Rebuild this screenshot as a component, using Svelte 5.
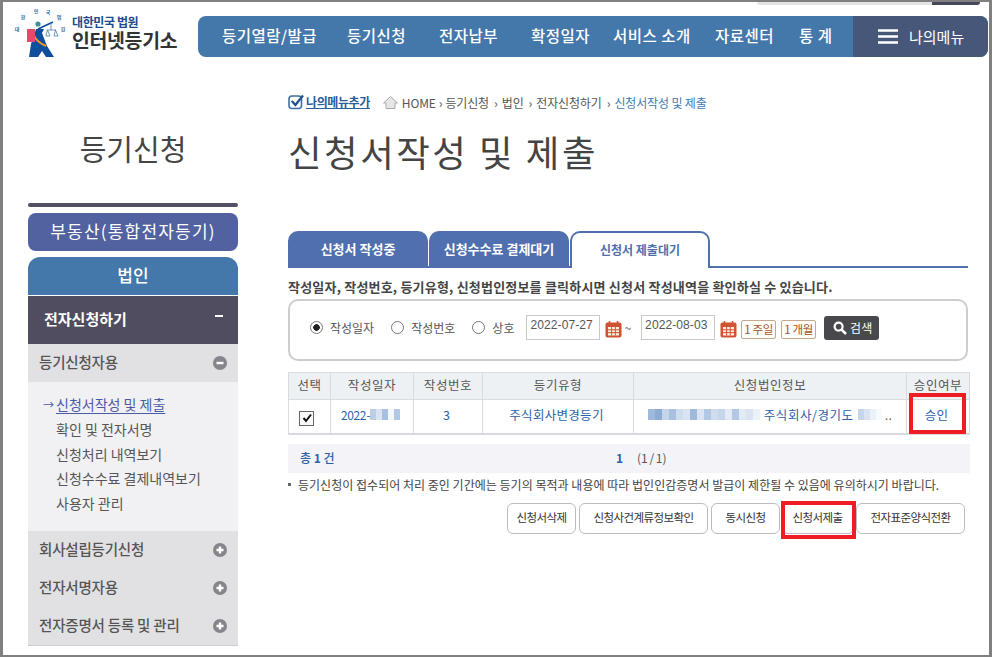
<script>
  // w is the pitch from one nav label to the next
  const navItems = [
    { name: '등기열람/발급', w: 125 },
    { name: '등기신청', w: 92 },
    { name: '전자납부', w: 92 },
    { name: '확정일자', w: 82 },
    { name: '서비스 소개', w: 102 },
    { name: '자료센터', w: 84 },
    { name: '통 계', w: 33 }
  ];
  const subLinks = ['신청서작성 및 제출', '확인 및 전자서명', '신청처리 내역보기', '신청수수료 결제내역보기', '사용자 관리'];
  const closedMenus = ['회사설립등기신청', '전자서명자용', '전자증명서 등록 및 관리'];
  const tabs = ['신청서 작성중', '신청수수료 결제대기', '신청서 제출대기'];
  const radios = ['작성일자', '작성번호', '상호'];
  const heads = ['선택', '작성일자', '작성번호', '등기유형', '신청법인정보', '승인여부'];
  const actions = ['신청서삭제', '신청사건계류정보확인', '동시신청', '신청서제출', '전자표준양식전환'];
  // pixelated bits that hide personal data in the row
  const blurDate = [0.35, 0.2, 0.45, 0.05, 0.4];
  const blurName = [0.5, 0.6, 0.3, 0.45, 0.25, 0.2, 0.5, 0.2, 0.4, 0.25, 0.3, 0.15, 0.4, 0.15, 0.2, 0.1];
  const blurAddr = [0.3, 0.2, 0.1, 0.04];
</script>

{#snippet calendar()}
  <svg class="cal" width="17" height="17" viewBox="0 0 17 17">
    <rect x="0.5" y="1.5" width="16" height="15" rx="2" fill="#cf5333" />
    <rect x="3" y="6" width="11" height="8.5" fill="#fbeedd" />
    <path d="M3 8.8h11M3 11.6h11M6.6 6v8.5M10.3 6v8.5" stroke="#cf5333" stroke-width="1" />
    <path d="M4.5 0v3M12.5 0v3" stroke="#cf5333" stroke-width="1.6" />
  </svg>
{/snippet}

<div class="frame">
  <div class="topstrip"><span></span></div>

  <header>
    <div class="logo">
      <svg width="56" height="52" viewBox="12 6 56 52">
        <g font-size="5" font-weight="700" fill="#2f6fa5" font-family="'Noto Sans CJK KR', sans-serif" text-anchor="middle">
          <text x="17" y="31">대</text>
          <text x="23" y="19">한</text>
          <text x="36" y="13">민</text>
          <text x="48" y="14">국</text>
          <text x="59" y="19">법</text>
          <text x="63" y="31">원</text>
        </g>
        <path d="M36 29 L31 44 L29 57 L38 57 L42 51 L46 57 L54 57 L47 46 L42 33 L44 29 Z" fill="#0d4f9c" />
        <path d="M33 33 C35 40 41 44 46 46" stroke="#f39a1f" stroke-width="2" fill="none" />
        <circle cx="38" cy="24" r="2.6" fill="#3f8fa0" />
        <path d="M38 29 L53 22" stroke="#0d4f9c" stroke-width="1.8" fill="none" />
        <rect x="27" y="29" width="8" height="13" fill="#e8486b" />
        <path d="M51 23v7M47 30h9M47.5 30l-1.5 6h4zM55.5 30l-1.5 6h4z" stroke="#4a7fa5" stroke-width="0.8" fill="none" />
      </svg>
      <div class="logotext">
        <div class="court">대한민국 법원</div>
        <div class="registry">인터넷등기소</div>
      </div>
    </div>
    <nav>
      <div class="navlinks">
        {#each navItems as item}
          <span style="width:{item.w}px">{item.name}</span>
        {/each}
      </div>
      <div class="mymenu">
        <svg width="20" height="15" viewBox="0 0 20 15"><path d="M0 1.5h20M0 7.5h20M0 13.5h20" stroke="#fff" stroke-width="2.6" /></svg>
        <span>나의메뉴</span>
      </div>
    </nav>
  </header>

  <div class="body">
    <aside>
      <h2>등기신청</h2>
      <div class="rule"></div>
      <div class="btn-realty">부동산(통합전자등기)</div>
      <div class="btn-corp">법인</div>
      <div class="menu-dark"><span>전자신청하기</span><i></i></div>
      <div class="menu-grey">
        <span>등기신청자용</span>
        <svg width="14" height="14" viewBox="0 0 14 14"><circle cx="7" cy="7" r="7" fill="#85858b" /><path d="M3.5 7h7" stroke="#fff" stroke-width="2.4" /></svg>
      </div>
      <ul>
        {#each subLinks as link, i}
          <li class:current={i === 0}>
            {#if i === 0}<em>→</em>{/if}<span>{link}</span>
          </li>
        {/each}
      </ul>
      {#each closedMenus as label}
        <div class="menu-grey">
          <span>{label}</span>
          <svg width="14" height="14" viewBox="0 0 14 14"><circle cx="7" cy="7" r="7" fill="#85858b" /><path d="M3.5 7h7M7 3.5v7" stroke="#fff" stroke-width="2.4" /></svg>
        </div>
      {/each}
      <div class="menu-end"></div>
    </aside>

    <main>
      <div class="crumbs">
        <span class="addmenu">
          <svg width="16" height="16" viewBox="0 0 16 16">
            <rect x="1" y="2" width="12.5" height="12.5" rx="3" fill="none" stroke="#3f6fa8" stroke-width="1.6" />
            <path d="M3.8 7 L7.4 11 L15 1.5" fill="none" stroke="#1f4f8f" stroke-width="2.2" />
          </svg>
          <b>나의메뉴추가</b>
        </span>
        <svg class="home" width="15" height="13" viewBox="0 0 15 13">
          <path d="M7.5 0.5 L0.5 7 H3 V12.5 H12 V7 H14.5 Z" fill="#e6e6e6" stroke="#a8a8a8" />
        </svg>
        <span class="path">HOME</span><span class="gt first">›</span>
        <span class="path">등기신청</span><span class="gt">›</span>
        <span class="path">법인</span><span class="gt">›</span>
        <span class="path">전자신청하기</span><span class="gt">›</span>
        <span class="path here">신청서작성 및 제출</span>
      </div>

      <h1>신청서작성 및 제출</h1>

      <div class="tabs">
        {#each tabs as tab, i}
          <div class="tab" class:on={i === 2}>{tab}</div>
        {/each}
      </div>

      <p class="info">작성일자, 작성번호, 등기유형, 신청법인정보를 클릭하시면 신청서 작성내역을 확인하실 수 있습니다.</p>

      <div class="search">
        {#each radios as label, i}
          <span class="radio" class:on={i === 0}><i></i>{label}</span>
        {/each}
        <span class="date">2022-07-27</span>
        {@render calendar()}
        <span class="tilde">~</span>
        <span class="date">2022-08-03</span>
        {@render calendar()}
        <span class="period">1 주일</span>
        <span class="period">1 개월</span>
        <span class="go">
          <svg width="14" height="14" viewBox="0 0 14 14"><circle cx="5.6" cy="5.6" r="4" fill="none" stroke="#fff" stroke-width="2.2" /><path d="M8.6 8.6 L13 13" stroke="#fff" stroke-width="2.6" /></svg>
          검색
        </span>
      </div>

      <div class="grid">
        {#each heads as head}
          <div class="th">{head}</div>
        {/each}
        <div class="td"><span class="check"><svg width="12" height="12" viewBox="0 0 12 12"><path d="M2.5 6 L5 9 L10 2.5" fill="none" stroke="#111" stroke-width="2" /></svg></span></div>
        <div class="td dateno">2022-{#each blurDate as a}<u style="opacity:{a}"></u>{/each}</div>
        <div class="td">3</div>
        <div class="td">주식회사변경등기</div>
        <div class="td corp">
          {#each blurName as a}<u class="wide" style="opacity:{a}"></u>{/each}
          <span class="corpname">주식회사/경기도</span>
          {#each blurAddr as a}<u style="opacity:{a}"></u>{/each}
          <span class="dots">..</span>
        </div>
        <div class="td approve">승인</div>
      </div>

      <div class="paging">
        <span class="total">총 <b>1</b> 건</span>
        <b class="cur">1</b>
        <span class="pages">(1 / 1)</span>
      </div>

      <p class="note">등기신청이 접수되어 처리 중인 기간에는 등기의 목적과 내용에 따라 법인인감증명서 발급이 제한될 수 있음에 유의하시기 바랍니다.</p>

      <div class="actions">
        {#each actions as action, i}
          <span class="action" class:marked={i === 3}>{action}</span>
        {/each}
      </div>
    </main>
  </div>
</div>

<style>
  :global(body) {
    margin: 0;
    background: #fff;
  }

  .frame {
    position: relative;
    box-sizing: border-box;
    width: 992px;
    height: 657px;
    overflow: hidden;
    border-style: solid;
    border-color: #808080;
    border-width: 2px 3px 2px 3px;
    background: #fff;
    color: #444;
    font-family: "Noto Sans CJK KR", "Noto Sans", sans-serif;
    font-size: 13px;
  }

  .topstrip {
    position: absolute;
    top: 0;
    left: 754px;
    width: 223px;
    height: 3px;
    background: #e4e4e4;
    border-radius: 0 0 5px 5px;
    overflow: hidden;
  }

  .topstrip span {
    display: block;
    margin-left: 175px;
    height: 3px;
    background: #47475a;
  }

  header {
    display: flex;
    height: 55px;
  }

  .logo {
    display: flex;
    width: 195px;
    padding: 4px 0 0 9px;
    box-sizing: border-box;
    gap: 4px;
  }

  .logotext {
    padding-top: 10px;
  }

  .court {
    font-size: 12px;
    line-height: 12px;
    font-weight: 700;
    color: #1c4a8c;
    letter-spacing: -0.4px;
  }

  .registry {
    margin-top: 2px;
    font-size: 19.4px;
    line-height: 20px;
    font-weight: 700;
    color: #333;
    letter-spacing: -0.3px;
    white-space: nowrap;
  }

  nav {
    display: flex;
    margin-top: 14px;
    height: 41px;
    width: 790px;
    background: #4477aa;
    border-radius: 8px;
    overflow: hidden;
    color: #fff;
  }

  .navlinks {
    display: flex;
    flex: 1;
    align-items: center;
    padding: 0 0 3px 24px;
  }

  .navlinks span {
    flex: none;
    font-size: 15.5px;
    font-weight: 500;
    letter-spacing: 0.5px;
    white-space: nowrap;
  }

  .mymenu {
    display: flex;
    align-items: center;
    gap: 11px;
    width: 135px;
    padding: 0 0 1px 25px;
    box-sizing: border-box;
    background: #47577a;
    font-size: 15px;
  }

  .body {
    display: flex;
  }

  aside {
    width: 210px;
    margin-left: 25px;
    flex: none;
  }

  aside h2 {
    margin: 66px 0 0;
    height: 80px;
    text-align: center;
    font-size: 29px;
    line-height: 50px;
    font-weight: 400;
    color: #444;
  }

  .rule {
    height: 4px;
    background: #544f65;
    border-radius: 2px;
    margin-bottom: 6px;
  }

  .btn-realty {
    height: 38px;
    line-height: 36px;
    background: #5261a0;
    border-radius: 8px;
    color: #fff;
    text-align: center;
    font-size: 17px;
    letter-spacing: 1.2px;
    margin-bottom: 6px;
    white-space: nowrap;
  }

  .btn-corp {
    height: 38px;
    line-height: 36px;
    background: #4477aa;
    border-radius: 12px 12px 0 0;
    border-bottom: 1px solid #fff;
    color: #fff;
    text-align: center;
    font-size: 17px;
    font-weight: 500;
  }

  .menu-dark {
    display: flex;
    justify-content: space-between;
    align-items: center;
    height: 48px;
    box-sizing: border-box;
    padding: 0 15px 4px 16px;
    background: #4f4d5f;
    color: #fff;
    font-size: 15px;
    font-weight: 700;
  }

  .menu-dark i {
    width: 8px;
    height: 2px;
    background: #fff;
    margin-bottom: 4px;
  }

  .menu-grey {
    display: flex;
    justify-content: space-between;
    align-items: center;
    height: 38px;
    padding: 0 11px;
    background: #e1e1e4;
    color: #555;
    font-size: 14.5px;
    font-weight: 500;
    letter-spacing: -0.2px;
  }

  .menu-grey span {
    margin-top: -4px;
  }

  .menu-end {
    height: 1px;
    background: #cfcfd2;
  }

  aside ul {
    margin: 0;
    padding: 10px 0 0 28px;
    height: 149px;
    box-sizing: border-box;
    list-style: none;
    background: #f1f1f3;
    font-size: 14px;
    color: #555;
  }

  aside li {
    position: relative;
    height: 24.75px;
    line-height: 24px;
  }

  aside li.current {
    color: #4a5aa5;
  }

  aside li.current span {
    text-decoration: underline;
    text-underline-offset: 3px;
    text-decoration-thickness: 1px;
  }

  aside li em {
    position: absolute;
    left: -13px;
    font-style: normal;
    font-size: 11px;
  }

  main {
    width: 682px;
    margin-left: 50px;
    flex: none;
  }

  .crumbs {
    display: flex;
    align-items: center;
    height: 20px;
    margin-top: 35px;
    font-size: 12px;
    letter-spacing: -0.15px;
    color: #555;
    white-space: nowrap;
  }

  .addmenu {
    display: flex;
    align-items: center;
    gap: 2px;
    margin-right: 13px;
    color: #2b5d9c;
    letter-spacing: -0.4px;
  }

  .addmenu b {
    font-weight: 700;
    border-bottom: 1px solid #2b5d9c;
    line-height: 13px;
  }

  .home {
    margin-right: 4px;
  }

  .gt {
    margin: 0 4px 0 5px;
    font-weight: 700;
    color: #777;
  }

  .gt.first {
    margin: 0 3px;
  }

  .here {
    color: #3f7ab5;
  }

  h1 {
    margin: 15px 0 0;
    height: 64px;
    font-size: 36.5px;
    line-height: 50px;
    font-weight: 400;
    letter-spacing: 2.5px;
    color: #444;
    white-space: nowrap;
  }

  .tabs {
    display: flex;
    margin-top: 40px;
    width: 680px;
    height: 37px;
    box-sizing: border-box;
    border-bottom: 2px solid #4f6fae;
  }

  .tab {
    width: 140px;
    height: 37px;
    box-sizing: border-box;
    margin-right: 1px;
    padding-bottom: 3px;
    display: flex;
    align-items: center;
    justify-content: center;
    background: #4f6fae;
    border-radius: 10px 10px 0 0;
    color: #fff;
    font-size: 13px;
    font-weight: 700;
    white-space: nowrap;
  }

  .tab.on {
    height: 37px;
    background: #fff;
    color: #4f6fae;
    border: 2px solid #4f6fae;
    border-bottom: 0;
    position: relative;
    z-index: 1;
    font-size: 12px;
  }

  .info {
    margin: 10px 0 0;
    height: 21px;
    font-size: 13px;
    line-height: 17px;
    font-weight: 700;
    color: #444;
    letter-spacing: 0.2px;
    white-space: nowrap;
  }

  .search {
    display: flex;
    align-items: center;
    box-sizing: border-box;
    width: 680px;
    height: 62px;
    padding: 0 0 5px 20px;
    border: 2px solid #cdcdcd;
    border-radius: 10px;
    font-size: 12px;
    color: #555;
  }

  .radio {
    display: flex;
    align-items: center;
    gap: 7px;
    margin-right: 17px;
  }

  .radio i {
    width: 11px;
    height: 11px;
    border: 1px solid #777;
    border-radius: 50%;
    background: #fff;
    box-sizing: content-box;
  }

  .radio.on i {
    background: radial-gradient(circle, #222 0 3px, #fff 3.6px);
  }

  .radio:nth-child(3) {
    margin-right: 12px;
  }

  .date {
    box-sizing: border-box;
    width: 74px;
    height: 25px;
    padding: 0 0 5px 3px;
    border: 1px solid #c8c8c8;
    line-height: 16px;
    font-family: "Liberation Sans", sans-serif;
    font-size: 12px;
    letter-spacing: 0.1px;
    display: flex;
    align-items: center;
  }

  .cal {
    margin: 3px 0 0 5px;
  }

  .tilde {
    margin: 0 10px 0 2px;
  }

  .period {
    box-sizing: border-box;
    width: 35px;
    height: 19px;
    line-height: 17px;
    margin: 4px 0 0 4px;
    border: 1px solid #c4a98c;
    border-radius: 2px;
    font-size: 11.5px;
    letter-spacing: -0.3px;
    text-align: center;
    color: #a4551e;
    background: #fffdf9;
    white-space: nowrap;
  }

  .period + .period {
    margin-left: 5px;
  }

  .go {
    display: flex;
    align-items: center;
    gap: 3px;
    box-sizing: border-box;
    width: 55px;
    height: 24px;
    margin: 0 0 0 8px;
    padding: 0 0 0 9px;
    border-radius: 3px;
    background: #48484d;
    color: #fff;
    font-size: 12px;
    white-space: nowrap;
  }

  .grid {
    display: grid;
    grid-template-columns: 42px 83px 69px 151px 273px 64px;
    grid-template-rows: 27px 33px;
    width: 682px;
    margin-top: 11px;
    box-sizing: border-box;
    border-top: 1px solid #d9dbe0;
    border-bottom: 2px solid #d9dbe0;
  }

  .th,
  .td {
    display: flex;
    align-items: center;
    justify-content: center;
    box-sizing: border-box;
    border-left: 1px solid #d9dbe0;
    white-space: nowrap;
  }

  .th:nth-child(6),
  .td:nth-child(12) {
    border-right: 1px solid #d9dbe0;
  }

  .th {
    padding-bottom: 3px;
    background: #eef1f4;
    border-bottom: 1px solid #d9dbe0;
    font-size: 12.5px;
    letter-spacing: 0.6px;
    color: #555;
  }

  .td {
    padding: 0 3px 5px 0;
    color: #2b62a8;
    font-size: 12.5px;
    letter-spacing: 0.3px;
  }

  .td.corp {
    padding-right: 0;
  }

  .dateno {
    font-size: 12px;
    letter-spacing: -0.4px;
  }

  .td u {
    display: inline-block;
    width: 6px;
    height: 11px;
    background: #3f74b8;
  }

  .td u.wide {
    width: 7px;
  }

  .corpname {
    margin: 0 4px;
    letter-spacing: 0.55px;
  }

  .dots {
    margin-left: 3px;
    color: #666;
  }

  .check {
    display: flex;
    align-items: center;
    justify-content: center;
    width: 13px;
    height: 13px;
    border: 1px solid #666;
    background: #fafafa;
    margin: 8px 3px 0 0;
  }

  /* red annotation boxes drawn over the screenshot */
  .approve {
    position: relative;
  }

  .approve::after {
    content: "";
    position: absolute;
    top: -7px;
    left: 2px;
    right: 3px;
    bottom: -1px;
    border: 4px solid #ee1c25;
  }

  .paging {
    display: flex;
    align-items: center;
    width: 682px;
    height: 29px;
    margin-top: 9px;
    padding: 0 0 3px 12px;
    box-sizing: border-box;
    background: #f3f3f8;
    color: #2b62a8;
    font-size: 12px;
    font-weight: 500;
  }

  .total {
    width: 316px;
    white-space: nowrap;
  }

  .cur {
    width: 21px;
    font-weight: 700;
  }

  .pages {
    color: #555;
    font-weight: 400;
    word-spacing: -1px;
  }

  .note {
    position: relative;
    margin: 3px 0 0;
    height: 27px;
    padding-left: 10px;
    font-size: 12px;
    line-height: 17px;
    letter-spacing: 0.02px;
    color: #444;
    white-space: nowrap;
  }

  .note::before {
    content: "";
    position: absolute;
    left: 0;
    top: 7px;
    width: 3px;
    height: 3px;
    background: #666;
  }

  .actions {
    display: flex;
    padding-left: 219px;
    gap: 3px;
  }

  .action {
    position: relative;
    box-sizing: border-box;
    height: 31px;
    line-height: 27px;
    border: 1px solid #bbb;
    border-radius: 6px;
    font-size: 11.5px;
    letter-spacing: -0.6px;
    color: #333;
    white-space: nowrap;
    text-align: center;
  }

  .action:nth-child(1) { width: 69px; }
  .action:nth-child(2) { width: 129px; }
  .action:nth-child(3) { width: 69px; }
  .action:nth-child(4) { width: 73px; margin-left: -2px; }
  .action:nth-child(5) { width: 109px; margin-left: -1px; }

  .action.marked::after {
    content: "";
    position: absolute;
    top: -3px;
    left: -1px;
    right: -3px;
    bottom: -6px;
    border: 4px solid #ee1c25;
    z-index: 2;
  }
</style>
